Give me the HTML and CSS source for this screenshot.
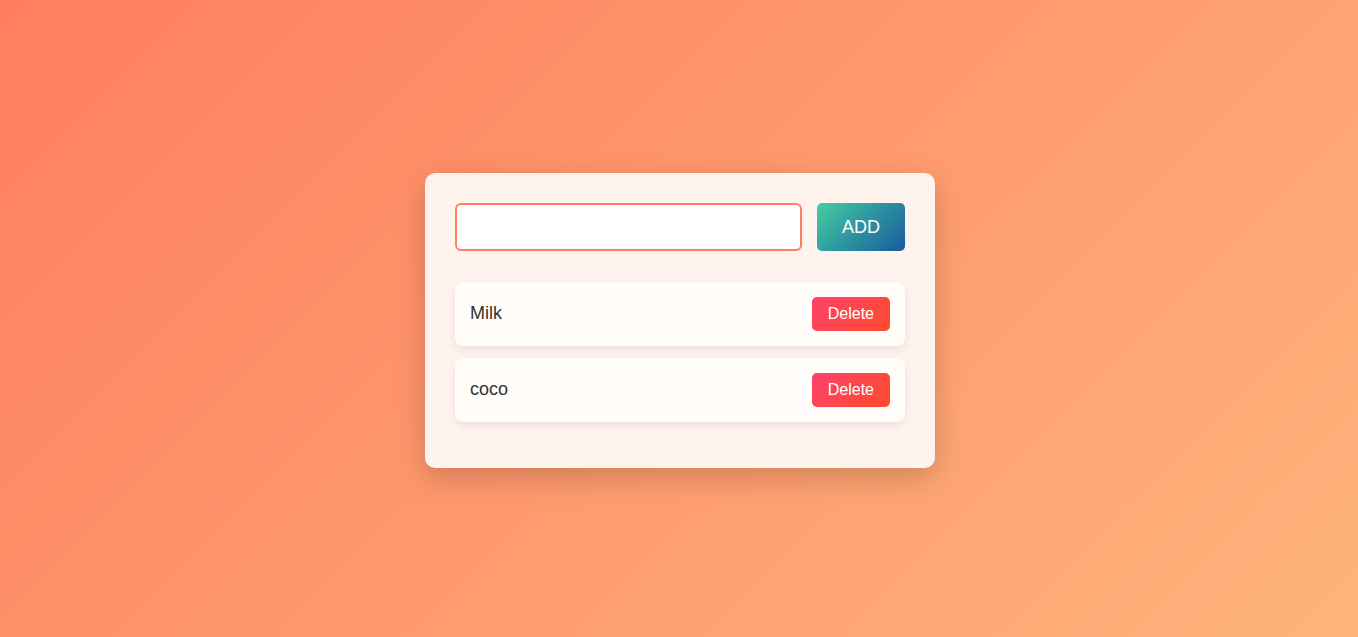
FILE: index.html
```html
<!DOCTYPE html>
<html lang="en">
<head>
<meta charset="utf-8">
<title>Todo</title>
<link rel="stylesheet" href="styles.css">
</head>
<body>
  <div class="card">
    <div class="entry">
      <input class="entry-input" type="text">
      <button class="add-btn">ADD</button>
    </div>
    <ul class="list">
      <li class="item"><span class="item-text">Milk</span><button class="del-btn">Delete</button></li>
      <li class="item"><span class="item-text">coco</span><button class="del-btn">Delete</button></li>
    </ul>
  </div>
</body>
</html>
```

FILE: styles.css
```css
* { box-sizing: border-box; }
html, body { height: 100%; }
body {
  margin: 0;
  font-family: "Liberation Sans", Arial, sans-serif;
  background: linear-gradient(135deg, #ff7e5f, #feb47b);
  display: flex;
  align-items: center;
  justify-content: center;
}
.card {
  width: 510px;
  background: #fff3ee;
  border-radius: 10px;
  padding: 30px 30px 46px;
  box-shadow: 0 10px 30px rgba(0, 0, 0, 0.18);
  margin: 3px 0 0 2px;
}
.entry {
  display: flex;
  gap: 15px;
}
.entry-input {
  flex: 1;
  height: 48px;
  border: 2px solid #ff7e5f;
  border-radius: 6px;
  background: #fff;
  font-size: 16px;
  padding: 0 12px;
  outline: none;
}
.add-btn {
  width: 88px;
  height: 48px;
  padding: 2px 0 0;
  border: none;
  border-radius: 5px;
  background: linear-gradient(135deg, #43cea2, #185a9d);
  color: #fff;
  font-family: "Liberation Sans", Arial, sans-serif;
  font-size: 18px;
}
.list {
  list-style: none;
  margin: 31px 0 0;
  padding: 0;
  display: flex;
  flex-direction: column;
  gap: 12px;
}
.item {
  height: 64px;
  background: #fffcfa;
  border-radius: 8px;
  padding: 0 15px;
  display: flex;
  align-items: center;
  justify-content: space-between;
  box-shadow: 0 4px 10px rgba(0, 0, 0, 0.08);
}
.item-text {
  font-size: 18px;
  color: #333;
}
.del-btn {
  height: 34px;
  padding: 0 16px;
  border: none;
  border-radius: 5px;
  background: linear-gradient(135deg, #ff416c, #ff4b2b);
  color: #fff;
  font-family: "Liberation Sans", Arial, sans-serif;
  font-size: 16px;
}
```
